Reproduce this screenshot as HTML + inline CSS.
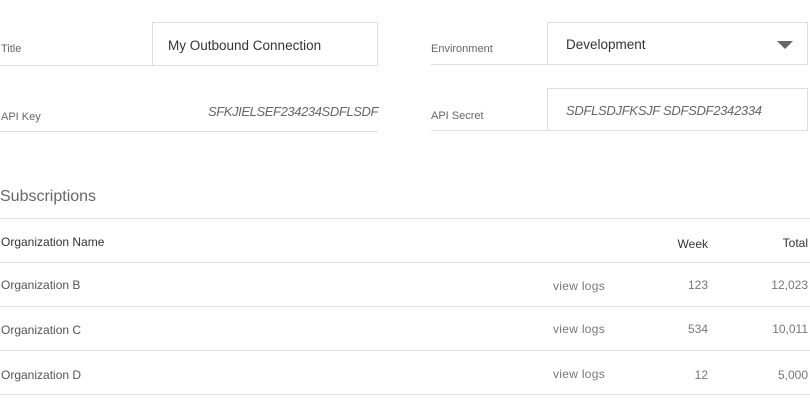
<!DOCTYPE html>
<html><head><style>
body{margin:0;width:810px;height:402px;background:#fff;font-family:"Liberation Sans",sans-serif;position:relative;overflow:hidden}
div{position:absolute}
.t{white-space:nowrap}
.lbl{font-size:11px;color:#666}
.line{height:1px;background:#ddd}
.box{border:1px solid #ddd;box-sizing:border-box}
.c{font-size:12px;color:#333}
.g{font-size:12px;color:#777}
.r{text-align:right}
</style></head><body>
<div class="box" style="left:152px;top:22px;width:226px;height:44px"></div>
<div class="line" style="left:0;top:65px;width:378px"></div>
<div class="t lbl" style="left:1px;top:43px">Title</div>
<div class="t" style="left:168px;top:38px;font-size:13.5px;color:#333">My Outbound Connection</div>

<div class="box" style="left:547px;top:22px;width:261px;height:43px"></div>
<div class="line" style="left:431px;top:64px;width:377px"></div>
<div class="t lbl" style="left:431px;top:43px">Environment</div>
<div class="t" style="left:566px;top:37px;font-size:13.5px;color:#333">Development</div>
<div style="left:777px;top:41px;width:0;height:0;border-left:8px solid transparent;border-right:8px solid transparent;border-top:8px solid #666"></div>

<div class="line" style="left:0;top:131px;width:378px"></div>
<div class="t lbl" style="left:1px;top:111px">API Key</div>
<div class="t r" style="left:150px;width:228px;top:104px;font-size:13px;font-style:italic;color:#666;letter-spacing:-0.4px">SFKJIELSEF234234SDFLSDF</div>

<div class="box" style="left:547px;top:88px;width:261px;height:43px"></div>
<div class="line" style="left:431px;top:130px;width:377px"></div>
<div class="t lbl" style="left:431px;top:110px">API Secret</div>
<div class="t" style="left:566px;top:103px;font-size:13px;font-style:italic;color:#666;letter-spacing:-0.3px">SDFLSDJFKSJF SDFSDF2342334</div>

<div class="t" style="left:0;top:188px;font-size:16px;color:#666">Subscriptions</div>
<div class="line" style="left:0;top:218px;width:810px"></div>
<div class="t c" style="left:1px;top:235px">Organization Name</div>
<div class="t c r" style="left:660px;width:48px;top:237px">Week</div>
<div class="t c r" style="left:740px;width:68px;top:236px">Total</div>
<div class="line" style="left:0;top:262px;width:810px"></div>

<div class="t g" style="left:1px;top:278px;color:#555">Organization B</div>
<div class="t g" style="left:553px;top:279px;letter-spacing:0.3px">view logs</div>
<div class="t g r" style="left:660px;width:48px;top:278px">123</div>
<div class="t g r" style="left:740px;width:68px;top:278px">12,023</div>
<div class="line" style="left:0;top:306px;width:810px"></div>

<div class="t g" style="left:1px;top:323px;color:#555">Organization C</div>
<div class="t g" style="left:553px;top:322px;letter-spacing:0.3px">view logs</div>
<div class="t g r" style="left:660px;width:48px;top:322px">534</div>
<div class="t g r" style="left:740px;width:68px;top:322px">10,011</div>
<div class="line" style="left:0;top:350px;width:810px"></div>

<div class="t g" style="left:1px;top:368px;color:#555">Organization D</div>
<div class="t g" style="left:553px;top:367px;letter-spacing:0.3px">view logs</div>
<div class="t g r" style="left:660px;width:48px;top:368px">12</div>
<div class="t g r" style="left:740px;width:68px;top:368px">5,000</div>
<div class="line" style="left:0;top:394px;width:810px"></div>
</body></html>
